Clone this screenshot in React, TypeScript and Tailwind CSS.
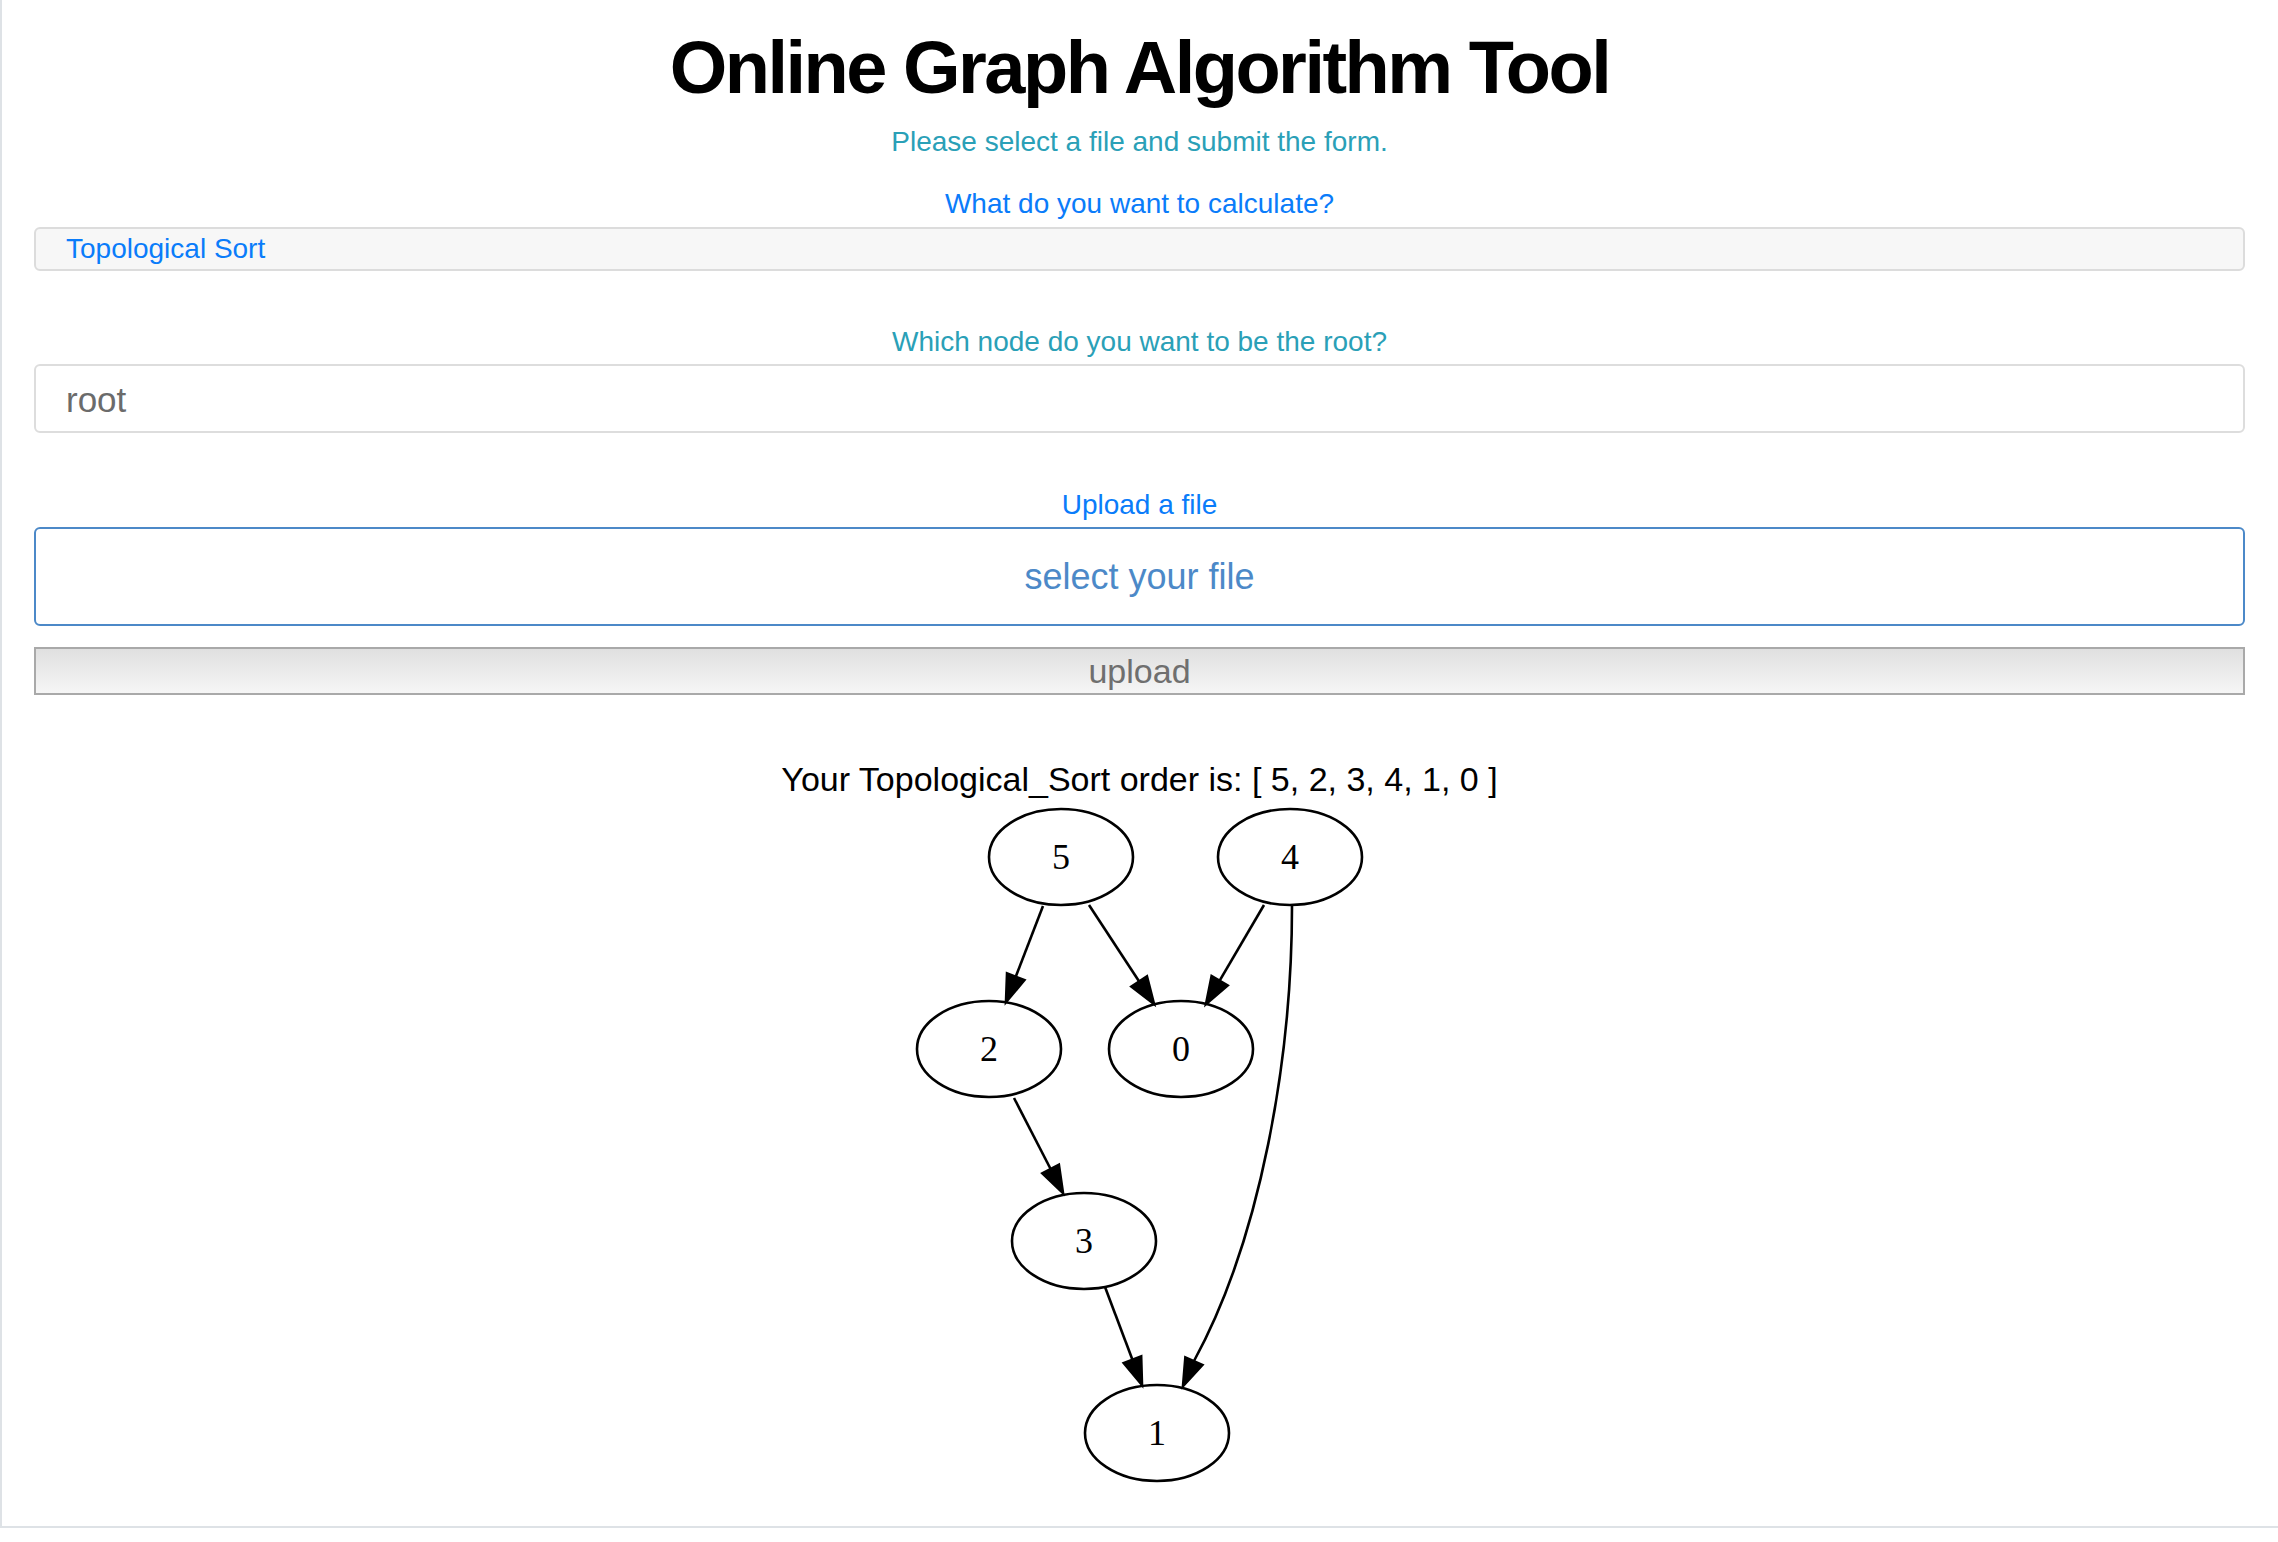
import React from 'react';

type Pt = [number, number];

interface GraphNode {
  id: string;
  x: number;
  y: number;
}

const nodes: GraphNode[] = [
  { id: '5', x: 155, y: 59 },
  { id: '4', x: 384, y: 59 },
  { id: '2', x: 83, y: 251 },
  { id: '0', x: 275, y: 251 },
  { id: '3', x: 178, y: 443 },
  { id: '1', x: 251, y: 635 },
];

// straight edges: start point on the tail node, tip on the head node
const edges: { from: Pt; tip: Pt }[] = [
  { from: [137, 108], tip: [100, 204] },
  { from: [183, 107], tip: [248, 206] },
  { from: [358, 107], tip: [300, 206] },
  { from: [108, 300], tip: [157, 395] },
  { from: [199, 489], tip: [236, 587] },
];

const ARROW_LEN = 27;
const ARROW_HALF = 9.3;

const arrowHead = (from: Pt, tip: Pt) => {
  const dx = tip[0] - from[0];
  const dy = tip[1] - from[1];
  const len = Math.hypot(dx, dy);
  const ux = dx / len;
  const uy = dy / len;
  const base: Pt = [tip[0] - ux * ARROW_LEN, tip[1] - uy * ARROW_LEN];
  const nx = -uy;
  const ny = ux;
  const points = [
    tip,
    [base[0] + nx * ARROW_HALF, base[1] + ny * ARROW_HALF],
    [base[0] - nx * ARROW_HALF, base[1] - ny * ARROW_HALF],
  ]
    .map((p) => `${p[0]},${p[1]}`)
    .join(' ');
  return { base, points };
};

const TopoGraph: React.FC = () => {
  const curveBase: Pt = [288, 563];
  const curveTip: Pt = [277, 588];
  const curveHead = arrowHead(curveBase, curveTip);

  return (
    <svg width={467} height={693} viewBox="0 0 467 693" className="block mx-auto">
      <g stroke="#000" strokeWidth={2.6} fill="none">
        {nodes.map((n) => (
          <ellipse key={n.id} cx={n.x} cy={n.y} rx={72} ry={48} />
        ))}
        {edges.map((e, i) => {
          const { base } = arrowHead(e.from, e.tip);
          return <line key={i} x1={e.from[0]} y1={e.from[1]} x2={base[0]} y2={base[1]} />;
        })}
        <path d="M386,108 C386,260 355,440 288,563" />
      </g>
      <g stroke="#000" strokeWidth={2.6} fill="#000">
        {edges.map((e, i) => (
          <polygon key={i} points={arrowHead(e.from, e.tip).points} />
        ))}
        <polygon points={curveHead.points} />
      </g>
      {nodes.map((n) => (
        <text
          key={n.id}
          x={n.x}
          y={n.y + 12}
          textAnchor="middle"
          fontSize={36}
          fontFamily="'Liberation Serif', 'Times New Roman', serif"
          fill="#000"
        >
          {n.id}
        </text>
      ))}
    </svg>
  );
};

export default function App() {
  return (
    <div
      className="w-full bg-white border-l-2 border-b-2 border-[#dee2e6] pt-[27px] pb-[35px] pl-[32px] pr-[33px] text-center"
      style={{ fontFamily: "'Liberation Sans', Arial, sans-serif" }}
    >
      <h1 className="text-[74px] leading-[81px] font-bold tracking-[-2.5px] text-black">
        Online Graph Algorithm Tool
      </h1>
      <p className="mt-[14px] text-[28px] leading-[40px] text-[#2aa0b7]">
        Please select a file and submit the form.
      </p>

      <form onSubmit={(e) => e.preventDefault()}>
        <label className="block mt-[21px] pt-[2px] text-[28px] leading-[38px] text-[#0a7cfa]">
          What do you want to calculate?
        </label>
        <div className="mt-[4px] h-[44px] flex items-center rounded-[6px] border-2 border-[#dcdcdc] bg-[#f7f7f7] pl-[30px] text-left text-[28px] leading-[40px] text-[#0a7cfa]">
          Topological Sort
        </div>

        <label className="block mt-[50px] pt-[2px] text-[28px] leading-[38px] text-[#2aa0b7]">
          Which node do you want to be the root?
        </label>
        <input
          type="text"
          placeholder="root"
          className="mt-[3px] block w-full h-[69px] rounded-[6px] border-2 border-[#dddddd] bg-white pl-[30px] pt-[3px] text-[35px] text-[#666] placeholder:text-[#6b6b6b] outline-none"
        />

        <label className="block mt-[50px] pt-[3px] text-[28px] leading-[37px] text-[#0a7cfa]">
          Upload a file
        </label>
        <label className="mt-[4px] h-[99px] flex items-center justify-center rounded-[6px] border-2 border-[#4c89c8] bg-white text-[36px] text-[#4c89c8] cursor-pointer">
          select your file
          <input type="file" className="hidden" />
        </label>

        <button
          type="submit"
          className="mt-[21px] block w-full h-[48px] border-2 border-[#a9a9a9] bg-gradient-to-b from-[#e0e0e0] to-[#f6f6f6] text-[34px] leading-[44px] text-[#6f6f6f]"
        >
          upload
        </button>
      </form>

      <div className="mt-[65px] text-[34px] leading-[38px] text-black">
        Your Topological_Sort order is: [ 5, 2, 3, 4, 1, 0 ]
      </div>
      <TopoGraph />
    </div>
  );
}
